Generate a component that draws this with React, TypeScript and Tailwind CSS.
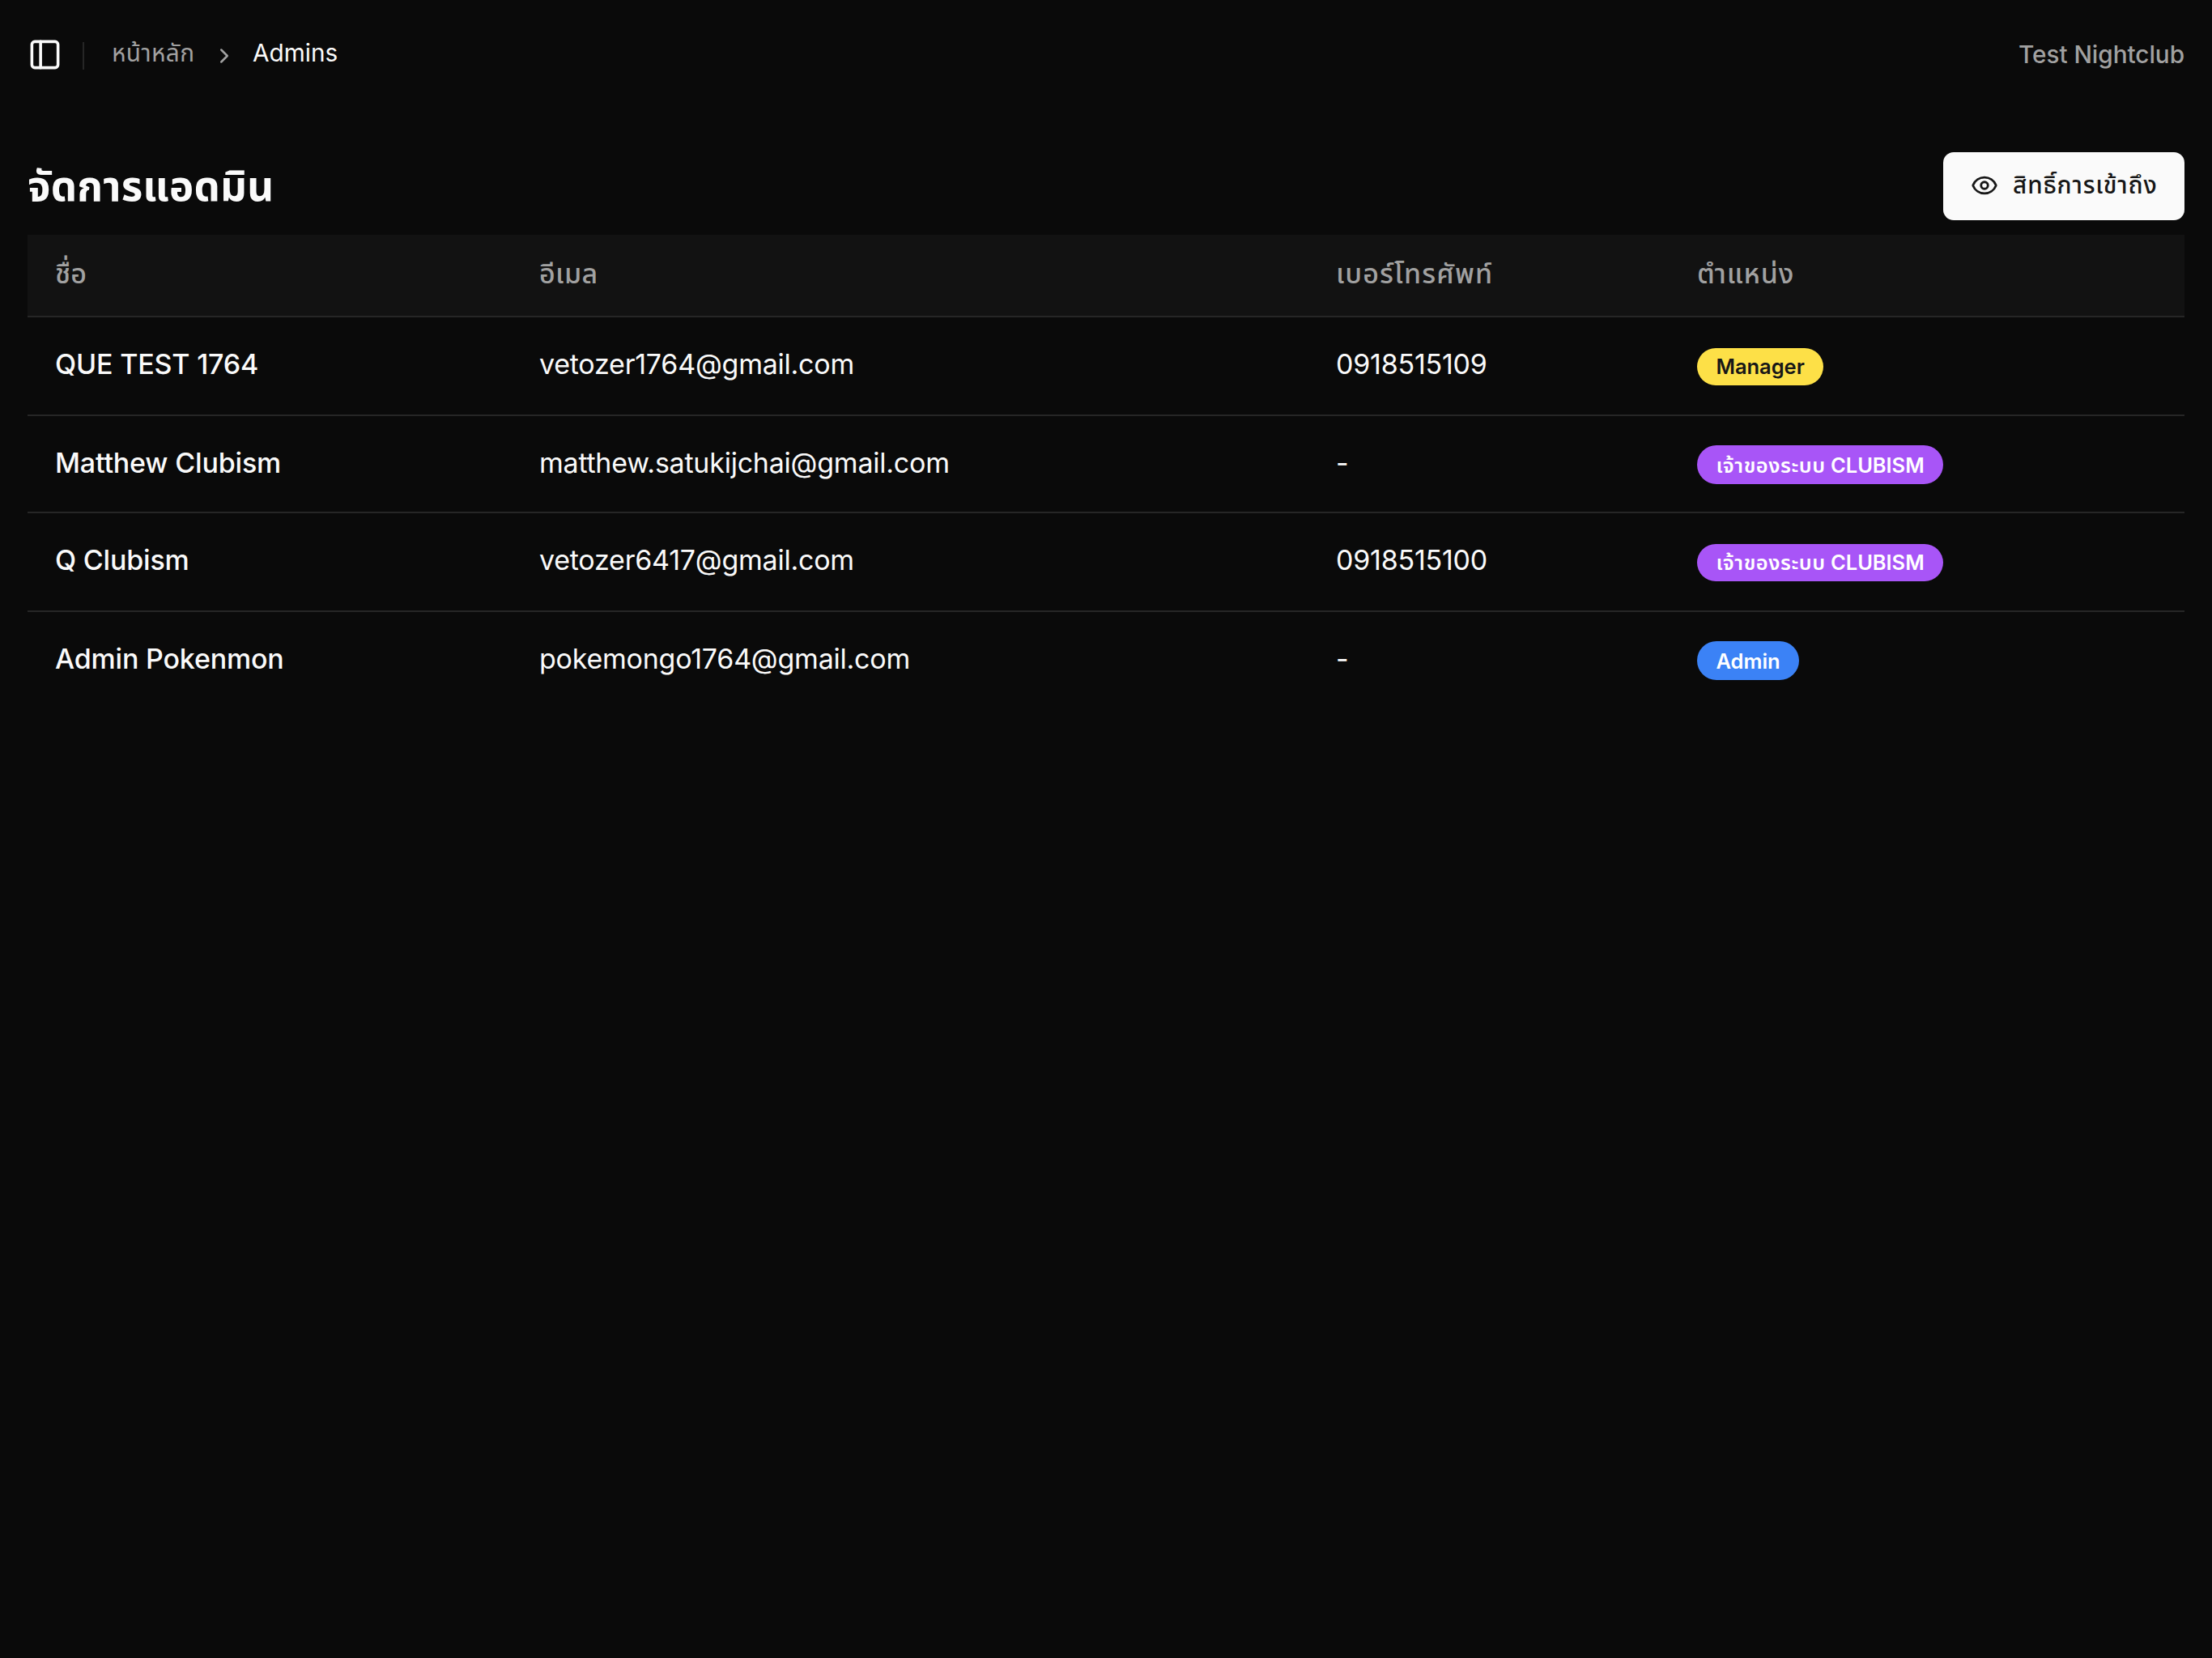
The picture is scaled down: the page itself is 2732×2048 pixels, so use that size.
import type { ReactNode } from "react";
import { ChevronRight, Eye, PanelLeft } from "lucide-react";
import { clsx } from "clsx";

type Role = "manager" | "owner" | "admin";

type Admin = {
  name: string;
  email: string;
  phone: string;
  role: Role;
};

const admins: Admin[] = [
  { name: "QUE TEST 1764", email: "vetozer1764@gmail.com", phone: "0918515109", role: "manager" },
  { name: "Matthew Clubism", email: "matthew.satukijchai@gmail.com", phone: "-", role: "owner" },
  { name: "Q Clubism", email: "vetozer6417@gmail.com", phone: "0918515100", role: "owner" },
  { name: "Admin Pokenmon", email: "pokemongo1764@gmail.com", phone: "-", role: "admin" },
];

const roles: Record<Role, { label: ReactNode; className: string }> = {
  manager: { label: "Manager", className: "bg-[#fde047] text-[#171717]" },
  owner: {
    label: (
      <>
        <span className="tracking-[0.5px]">เจ้าของระบบ</span> CLUBISM
      </>
    ),
    className: "bg-[#a855f7] text-white",
  },
  admin: { label: "Admin", className: "bg-[#3b82f6] text-white" },
};

const columns = [
  { label: "ชื่อ", className: "" },
  { label: "อีเมล", className: "tracking-[0.4px]" },
  { label: "เบอร์โทรศัพท์", className: "tracking-[1.1px]" },
  { label: "ตำแหน่ง", className: "tracking-[0.8px]" },
];

function Header() {
  return (
    <header className="flex h-[134px] items-center justify-between px-[34px]">
      <div className="flex items-center">
        <button type="button" aria-label="Toggle sidebar" className="flex w-[42px] justify-center">
          <PanelLeft size={43} strokeWidth={2} className="shrink-0" />
        </button>
        <div className="ml-[26px] mt-1 h-[34px] w-[2px] bg-[#262626]" />
        <nav aria-label="breadcrumb" className="ml-[34px] flex items-center text-[29.75px] leading-[42px]">
          <a href="#" className="mb-1 w-[102px] whitespace-nowrap tracking-[0.4px] text-[#a1a1a1]">
            หน้าหลัก
          </a>
          <ChevronRight size={30} className="ml-[22px] mt-[3px] text-[#a1a1a1]" />
          <span className="mb-1 ml-[20px]">Admins</span>
        </nav>
      </div>
      <span className="text-[29.75px] font-medium leading-[42px] tracking-[-0.06px] text-[#a1a1a1]">Test Nightclub</span>
    </header>
  );
}

function RoleBadge({ role, tall }: { role: Role; tall: boolean }) {
  return (
    <span
      className={clsx(
        "flex w-fit items-center rounded-full px-[23.5px] text-[25.5px] font-semibold leading-[34px]",
        tall ? "h-[48px] pt-px" : "mt-[2px] h-[46px]",
        roles[role].className,
      )}
    >
      <span className="whitespace-nowrap tracking-[-0.05px]">{roles[role].label}</span>
    </span>
  );
}

function AdminTable() {
  return (
    <table className="w-full table-fixed border-separate border-spacing-0 text-left text-[34px] leading-[48px]">
      <colgroup>
        <col className="w-[598px]" />
        <col className="w-[984px]" />
        <col className="w-[446px]" />
        <col />
      </colgroup>
      <thead>
        <tr className="bg-[#121212]">
          {columns.map((column) => (
            <th
              key={column.label}
              className={clsx(
                "h-[102px] border-b-2 border-[#262626] px-[34px] pb-1 font-medium text-[#a1a1a1]",
                column.className,
              )}
            >
              {column.label}
            </th>
          ))}
        </tr>
      </thead>
      <tbody className="tracking-[-0.23px]">
        {admins.map((admin, i) => (
          <tr
            key={admin.email}
            className={clsx(
              "align-top *:border-[#262626] *:px-[34px] *:pt-[34px]",
              i % 2 === 0 ? "h-[122px]" : "h-[120px]",
              i < admins.length - 1 && "*:border-b-2",
            )}
          >
            <td className="font-medium tracking-[-0.18px]">{admin.name}</td>
            <td>{admin.email}</td>
            <td>{admin.phone}</td>
            <td>
              <div className="pt-[2px]">
                <RoleBadge role={admin.role} tall={i % 2 === 1} />
              </div>
            </td>
          </tr>
        ))}
      </tbody>
    </table>
  );
}

export default function App() {
  return (
    <div className="min-h-screen bg-[#0a0a0a] font-['Inter','Noto_Sans_Thai','Noto_Sans',sans-serif] text-[#fafafa]">
      <Header />
      <main className="px-[34px] pt-[54px]">
        <div className="flex h-[84px] items-center justify-between">
          <h1 className="text-[51px] font-bold leading-[68px] tracking-[0.2px]">จัดการแอดมิน</h1>
          <button
            type="button"
            className="flex h-[84px] w-[298px] items-center rounded-[13px] bg-[#fafafa] pl-[34px] text-[29.75px] font-medium text-[#171717]"
          >
            <Eye size={34} className="mr-[18px] mt-[-2px] shrink-0" />
            <span className="mb-[5px] whitespace-nowrap leading-[42px] tracking-[0.85px]">สิทธิ์การเข้าถึง</span>
          </button>
        </div>
        <div className="mt-[18px]">
          <AdminTable />
        </div>
      </main>
    </div>
  );
}
